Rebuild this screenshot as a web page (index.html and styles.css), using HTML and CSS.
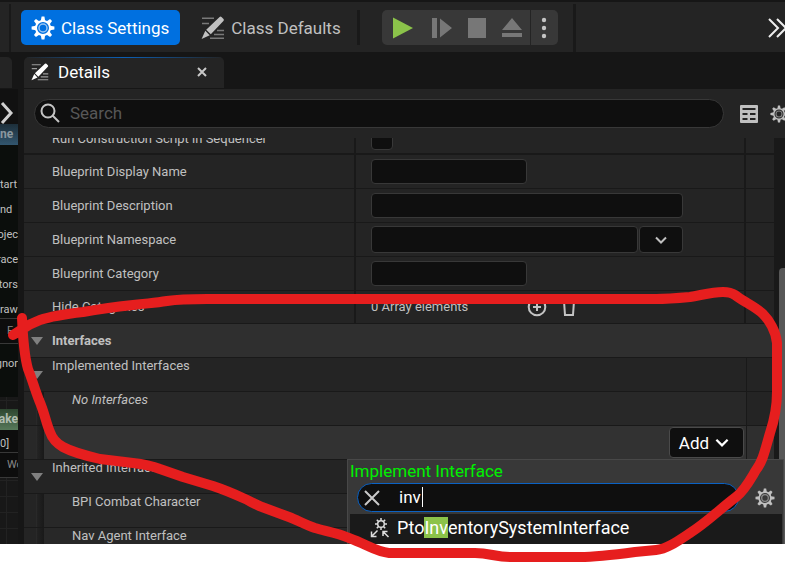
FILE: index.html
```html
<!DOCTYPE html>
<html lang="en">
<head>
<meta charset="utf-8">
<title>Class Settings</title>
<link rel="stylesheet" href="styles.css">
</head>
<body>
<svg class="defs" aria-hidden="true">
  <symbol id="gear" viewBox="0 0 24 24">
    <g fill="currentColor">
      <path id="tooth" d="M10.6 0.6h2.8l.8 4.4h-4.4z"/>
      <use href="#tooth" transform="rotate(45 12 12)"/><use href="#tooth" transform="rotate(90 12 12)"/>
      <use href="#tooth" transform="rotate(135 12 12)"/><use href="#tooth" transform="rotate(180 12 12)"/>
      <use href="#tooth" transform="rotate(225 12 12)"/><use href="#tooth" transform="rotate(270 12 12)"/>
      <use href="#tooth" transform="rotate(315 12 12)"/>
    </g>
    <circle cx="12" cy="12" r="7" fill="none" stroke="currentColor" stroke-width="2"/>
    <circle cx="12" cy="12" r="4" fill="none" stroke="currentColor" stroke-width="1.5" opacity=".6"/>
  </symbol>
  <symbol id="pencil" viewBox="0 0 24 24">
    <g stroke="currentColor" stroke-width="1.4" opacity=".55">
      <path d="M1 2.2h12M1 7.5h7M16 14.5h7M13 18.5h10M9 22.3h14"/>
    </g>
    <path fill="currentColor" d="M18.6.9q1-.7 1.9.1l2 2q.9 1-.1 2L9.800 18.200 5.200 13.700zM4.300 14.800 8.700 19.200 0.600 23z"/>
  </symbol>
  <symbol id="down" viewBox="0 0 12 8"><path d="M1 1.500 6 6.500 11 1.500" fill="none" stroke="currentColor" stroke-width="2"/></symbol>
</svg>

<main class="app">
  <header class="toolbar">
    <span class="rule rule-tall rule-first"></span>
    <button class="tool tool-active"><svg class="icon24"><use href="#gear"/></svg>Class Settings</button>
    <button class="tool"><svg class="icon24"><use href="#pencil"/></svg>Class Defaults</button>
    <span class="rule"></span>
    <div class="play">
      <button aria-label="Play"><svg width="22" height="24"><path d="M1 1.500 21 12 1 22.500z" fill="#8bc34a"/></svg></button>
      <button aria-label="Step"><svg width="20" height="24"><path d="M0 2h5v20H0zM8 2.500 20 12 8 21.500z" fill="#777"/></svg></button>
      <button aria-label="Stop"><svg width="18" height="24"><path d="M0 2h18v20H0z" fill="#777"/></svg></button>
      <button aria-label="Eject"><svg width="22" height="24"><path d="M11 2 21 14H1zM1 17h20v4H1z" fill="#777"/></svg></button>
      <button class="more" aria-label="Play options"><svg width="6" height="24" fill="#c4c4c4"><circle cx="3" cy="4" r="2.200"/><circle cx="3" cy="12" r="2.200"/><circle cx="3" cy="20" r="2.200"/></svg></button>
    </div>
    <span class="rule rule-tall"></span>
    <button class="overflow" aria-label="More tools"><svg width="20" height="20" fill="none" stroke="#eee" stroke-width="2"><path d="M1 1 10 10 1 19M9 1 18 10 9 19"/></svg></button>
  </header>

  <nav class="tabs">
    <span class="tab-stub"></span>
    <div class="tab">
      <svg class="icon18"><use href="#pencil"/></svg><span>Details</span>
      <button aria-label="Close tab"><svg width="10" height="10" stroke="#c8c8c8" stroke-width="2"><path d="M1 1 9 9M9 1 1 9"/></svg></button>
    </div>
  </nav>

  <div class="body">
    <aside class="graph">
      <div class="graph-top"><svg width="14" height="24" fill="none" stroke="#d0d0d0" stroke-width="3"><path d="M2 2 11 12 2 22"/></svg></div>
      <div class="node-title">ne</div>
      <ul class="pins">
        <li>tart</li><li>nd</li><li class="tail">ojec</li><li class="tail">race</li><li class="tail">ctors</li><li>raw</li>
      </ul>
      <div class="pin-box">F</div>
      <div class="pin-last tail">gnor</div>
      <div class="node-title node-green tail">lake</div>
      <div class="pin-value">0]</div>
      <div class="pin-box">Wo</div>
    </aside>

    <section class="panel">
      <div class="filter">
        <label class="search">
          <svg width="20" height="20" fill="none" stroke="#c4c4c4" stroke-width="2"><circle cx="8" cy="8" r="6.500"/><path d="M12.500 12.500 19 19"/></svg>
          <input type="search" placeholder="Search" aria-label="Search details">
        </label>
        <button aria-label="Property matrix"><svg width="18" height="18"><rect width="18" height="18" rx="1" fill="#c0c0c0"/><path d="M2.500 3h13v2h-13zM2.500 8h5v2h-5zM10 8h5.500v2H10zM2.500 13h5v2h-5zM10 13h5.500v2H10z" fill="#242424"/></svg></button>
        <button class="settings" aria-label="Settings"><svg class="icon18"><use href="#gear"/></svg></button>
      </div>

      <div class="scroll">
        <div class="list">
          <div class="row row-cut"><label for="seq">Run Construction Script in Sequencer</label><div class="value"><input type="checkbox" id="seq"></div><i></i></div>
          <div class="row"><label for="dn">Blueprint Display Name</label><div class="value"><input class="short" id="dn"></div><i></i></div>
          <div class="row"><label for="bd">Blueprint Description</label><div class="value"><input class="long" id="bd"></div><i></i></div>
          <div class="row"><label for="ns">Blueprint Namespace</label><div class="value"><input class="combo" id="ns"><button class="pick" aria-label="Choose namespace"><svg width="12" height="8"><use href="#down"/></svg></button></div><i></i></div>
          <div class="row"><label for="bc">Blueprint Category</label><div class="value"><input class="short" id="bc"></div><i></i></div>
          <div class="row row-array"><span class="name">Hide Categories</span>
            <div class="value"><span class="count">0 Array elements</span>
              <button class="plain" aria-label="Add element"><svg width="20" height="20" fill="none" stroke="#c4c4c4" stroke-width="2"><circle cx="10" cy="10" r="8.300"/><path d="M10 6v8M6 10h8"/></svg></button>
              <button class="plain" aria-label="Remove all"><svg width="16" height="20" fill="none" stroke="#c4c4c4" stroke-width="2"><path d="M1 3h14M3 4 4 18h8L13 4"/></svg></button>
            </div><i></i></div>
          <h2 class="category"><span class="arrow"></span>Interfaces</h2>
          <div class="sub"><span class="arrow"></span><span>Implemented Interfaces</span><i></i></div>
          <div class="sub child"><em>No Interfaces</em><i></i></div>
          <div class="sub child footer">
            <button class="add">Add<svg width="14" height="9"><use href="#down"/></svg></button><i></i>
            <div class="menu">
              <h3>Implement Interface</h3>
              <div class="menu-filter">
                <div class="menu-search">
                  <button aria-label="Clear"><svg width="16" height="16" stroke="#c8c8c8" stroke-width="2"><path d="M1 1 15 15M15 1 1 15"/></svg></button>
                  <input type="text" value="inv" aria-label="Search interfaces"><span class="caret"></span>
                </div>
                <button aria-label="View options"><svg class="icon20"><use href="#gear"/></svg></button>
              </div>
              <button class="option">
                <svg width="20" height="20" viewBox="0 0 20 20" fill="none" stroke="#ddd" stroke-width="1.500"><circle cx="11" cy="6" r="3.300"/><path d="M11 0v2.500M11 9.500V12M5 6h2.500M14.500 6H17M6.800 1.800l1.700 1.700M15.200 1.800l-1.700 1.700M6.800 10.200l1.700-1.700M15.200 10.200l-1.700-1.700M7.500 12.500 2 18M1.500 13.500v5h5M18.500 19 13.500 14M13 18v-4.500h4.500"/></svg>
                <span>Pto<mark>Inv</mark>entorySystemInterface</span>
              </button>
            </div>
          </div>
          <div class="sub"><span class="arrow"></span><span>Inherited Interfaces</span><i></i></div>
          <div class="sub child"><span>BPI Combat Character</span><i></i></div>
          <div class="sub child"><span>Nav Agent Interface</span><i></i></div>
        </div>
        <div class="track"><div class="thumb"></div></div>
      </div>
    </section>
  </div>
</main>

<svg class="markup" viewBox="0 0 785 564" preserveAspectRatio="xMinYMin meet" aria-hidden="true">
  <path d="M13 335C22 330 26 325 40 320C52 316 66 314 83 312C100 309 115 307 133 305C150 303 155 303 167 301C180 299 193 299 207 299H390L656 299C668 299 679 298 690 297C702 295 712 292 723 292C730 292 732 293 735 295C744 302 756 307 763 314C769 320 776 331 777 343V392C777 405 775 418 770 433C765 450 763 461 756 470C750 480 745 490 736 497C720 509 706 523 690 533C678 541 667 549 656 550L635 552C620 554 597 557 580 557H510C495 557 490 553 475 553H389C376 552 366 544 349 538C338 533 325 531 315 528C306 525 297 520 289 517L262 507C256 505 250 501 243 498C232 493 222 489 213 486L183 477L160 469C152 466 142 464 133 463L100 459C87 456 74 453 63 447C56 443 52 438 50 432C46 423 45 414 39 400C35 390 32 379 28 369C24 355 23 340 22 318"/>
</svg>
</body>
</html>
```

FILE: styles.css
```css
* { box-sizing: border-box; }

body {
  margin: 0;
  padding-bottom: 20px;
  height: 100vh;
  display: flex;
  flex-direction: column;
  position: relative;
  overflow: hidden;
  background: #fff;
  color: #c0c0c0;
  font: 13px/16px Roboto, "Liberation Sans", sans-serif;
}

button, input { font: inherit; color: inherit; }
button { border: 0; padding: 0; background: none; display: flex; align-items: center; justify-content: center; }
.defs { position: absolute; width: 0; height: 0; }
.icon24 { width: 24px; height: 24px; }
.icon20 { width: 20px; height: 20px; }
.icon18 { width: 20px; height: 18px; }

.app {
  flex: 1;
  min-height: 0;
  display: flex;
  flex-direction: column;
  overflow: hidden;
  background: #161616;
}

/* Toolbar */
.toolbar {
  flex: none;
  height: 52px;
  display: flex;
  align-items: center;
  padding-top: 1px;
  background: #242424;
  border-top: 2px solid #161616;
  overflow: hidden;
}
.rule { flex: none; width: 3px; height: 35px; background: #191919; }
.rule-tall { height: 48px; }
.rule-first { width: 2px; margin: 0 10px 0 9px; }
.tool {
  flex: none;
  height: 35px;
  gap: 6px;
  padding: 0 11px 0 10px;
  border-radius: 5px;
  font-size: 17px;
  white-space: nowrap;
}
.tool-active { background: #0070e0; color: #fff; }
.tool + .tool { margin-left: 11px; }
.tool + .rule { margin-left: 5px; }
.play {
  flex: none;
  display: flex;
  height: 35px;
  margin: 0 15px 0 22px;
  border-radius: 5px;
  background: #383838;
  overflow: hidden;
}
.play button { width: 35px; }
.play button:first-child { width: 43px; }
.play button.more { width: 28px; border-left: 1px solid #242424; }
.overflow { margin-left: auto; width: 17px; flex: none; justify-content: flex-start; }
.overflow svg { flex: none; }

/* Tabs */
.tabs {
  flex: none;
  display: flex;
  gap: 12px;
  height: 37px;
  padding: 5px 0 1px;
}
.tab-stub { width: 12px; background: #242424; border-radius: 0 5px 0 0; }
.tab {
  display: flex;
  align-items: center;
  gap: 8px;
  width: 200px;
  padding: 0 17px 2px 6px;
  border-radius: 5px 5px 0 0;
  background: linear-gradient(90deg, #242424, #0b5fb5 50%, #242424) top / 100% 1px no-repeat #242424;
  color: #fff;
  font-size: 17px;
}
.tab button { margin-left: auto; }

.body { flex: 1; min-height: 0; display: flex; gap: 6px; }

/* Blueprint graph strip */
.graph {
  flex: none;
  width: 18px;
  overflow: hidden;
  font-size: 11px;
  line-height: 16px;
  white-space: nowrap;
  background: linear-gradient(90deg, #222 1px, transparent 1px) 6px 0 / 16px 16px, linear-gradient(#222 1px, transparent 1px) 0 7px / 16px 16px, #181818;
}
.graph-top { height: 35px; padding-top: 12px; background: #111; }
.node-title {
  height: 21px;
  padding-top: 2px;
  background: linear-gradient(#1d2f3a, #32566f);
  color: #8b989f;
  font-size: 12px;
  font-weight: 700;
}
.pins {
  list-style: none;
  display: flex;
  flex-direction: column;
  gap: 9px;
  margin: 0;
  padding: 32px 0 0;
  background: #0b0e0c;
}
.tail { display: flex; justify-content: flex-end; }
.pin-box {
  height: 26px;
  line-height: 24px;
  padding-left: 7px;
  border: solid #383838;
  border-width: 1px 0;
  background: #0d0d0d;
  color: #888;
}
.pin-last { height: 53px; padding-top: 12px; background: #0b0e0c; }
.node-green { margin-top: 12px; background: linear-gradient(#2d4630, #57795a); color: #b0bcb0; }
.pin-value { height: 22px; padding-top: 6px; background: #0d0d0d; }

/* Details panel */
.panel {
  flex: 1;
  min-width: 0;
  display: flex;
  flex-direction: column;
  background: #242424;
}
.filter { flex: none; display: flex; align-items: center; height: 49px; padding-left: 10px; }
.search {
  flex: 1;
  min-width: 0;
  display: flex;
  align-items: center;
  gap: 10px;
  height: 29px;
  padding: 0 6px 1px 5px;
  border: 1px solid #383838;
  border-radius: 15px;
  background: #0f0f0f;
}
.search svg { flex: none; }
.search input { flex: 1; min-width: 0; border: 0; outline: 0; padding: 0; background: none; font-size: 17px; }
.search input::placeholder { color: #575757; }
.filter button { flex: none; margin-left: 16px; }
.filter button.settings { width: 16px; margin-left: 11px; overflow: hidden; justify-content: flex-start; }
.settings svg { flex: none; }

.scroll { flex: 1; min-height: 0; display: flex; }
.list { flex: 1; min-width: 0; }
.row {
  display: grid;
  grid-template-columns: 332px minmax(0, 1fr) 30px;
  height: 34px;
  border-bottom: 1px solid #191919;
}
.row > label, .name { display: flex; align-items: center; padding-left: 28px; border-right: 2px solid #191919; white-space: nowrap; }
.row > i { border-left: 2px solid #191919; }
.value { display: flex; align-items: center; padding-left: 15px; }
.row-cut { height: 17px; border-bottom-width: 2px; align-items: stretch; overflow: hidden; }
.row-cut > label, .row-cut > .value { height: 34px; margin-top: -16px; }
.row-array { height: 33px; }
.value input {
  height: 25px;
  min-width: 0;
  border: 1px solid #383838;
  border-radius: 4px;
  background: #0f0f0f;
}
.value input[type="checkbox"] { appearance: none; width: 22px; height: 22px; margin: 0; }
.value .short { width: 156px; }
.value .long { width: 312px; }
.value .combo { width: 267px; height: 27px; }
.pick { width: 44px; height: 27px; margin-left: 1px; border: 1px solid #383838; border-radius: 4px; background: #0f0f0f; }
.count { width: 156px; }
.plain + .plain { margin-left: 14px; }

.category {
  display: flex;
  align-items: center;
  height: 34px;
  margin: 0;
  border-bottom: 1px solid #191919;
  background: #2f2f2f;
  font-size: 13px;
  font-weight: 700;
}
.arrow {
  flex: none;
  margin: 0 9px 0 7px;
  border: 6px solid transparent;
  border-top: 8px solid #808080;
  border-bottom: 0;
}
.sub {
  display: flex;
  position: relative;
  height: 34px;
  border-bottom: 1px solid #191919;
  white-space: nowrap;
}
.sub > span, .sub > em { line-height: 16px; }
.sub > .arrow { margin-top: 13px; }
.sub > i { width: 28px; margin-left: auto; border-left: 1px solid #191919; background: #242424; }
.child {
  padding-left: 48px;
  background: linear-gradient(90deg, #242424 12px, #303030 12px, #222 13px, #191919 20px, #282828 20px);
}
.footer { background: linear-gradient(90deg, #282828 12px, #303030 12px, #242424 13px, #191919 20px, #323232 20px); }
.footer > i { margin-left: 2px; background: #2f2f2f; }
.add {
  width: 75px;
  height: 31px;
  margin: 1px 0 0 auto;
  gap: 6px;
  padding-right: 5px;
  border: 1px solid #4a4a4a;
  border-radius: 4px;
  background: #0f0f0f;
  color: #fff;
  font-size: 17px;
}
.track { flex: none; width: 11px; padding: 130px 0 0 5px; background: #191919; display: flex; }
.thumb { flex: 1; border-radius: 4px 0 0 0; background: #575757; }

/* Interface picker */
.menu {
  position: absolute;
  z-index: 2;
  top: 100%;
  right: -10px;
  width: 437px;
  padding: 1px 1px 1px 2px;
  border: 1px solid #484848;
  background: #383838;
  color: #fff;
}
.menu h3 { margin: 0; color: #00f000; font-size: 17px; font-weight: 400; line-height: 20px; }
.menu-filter { display: flex; align-items: center; padding: 2px 7px 2px 7px; }
.menu-search {
  flex: 1;
  display: flex;
  align-items: center;
  position: relative;
  height: 29px;
  padding-left: 6px;
  border: 1px solid #0b62c4;
  border-radius: 15px;
  background: #0f0f0f;
}
.menu-search input { flex: 1; min-width: 0; margin: 0 10px 0 19px; padding: 0 0 2px; border: 0; outline: 0; background: none; font-size: 17px; }
.caret { position: absolute; left: 64px; top: 3px; width: 1px; height: 20px; background: #fff; }
.menu-filter > button { margin-left: 16px; color: #c0c0c0; }
.option { width: 100%; height: 30px; gap: 7px; padding: 0 0 2px 20px; justify-content: flex-start; background: #1a1a1a; font-size: 18px; line-height: 20px; }
mark { background: #8bc34a; color: #fff; }

/* Freehand outline */
.markup { position: absolute; z-index: 3; top: 0; left: 0; width: 100%; height: 100%; pointer-events: none; }
.markup path { fill: none; stroke: #e61e1e; stroke-width: 10; stroke-linecap: round; stroke-linejoin: round; }
```
